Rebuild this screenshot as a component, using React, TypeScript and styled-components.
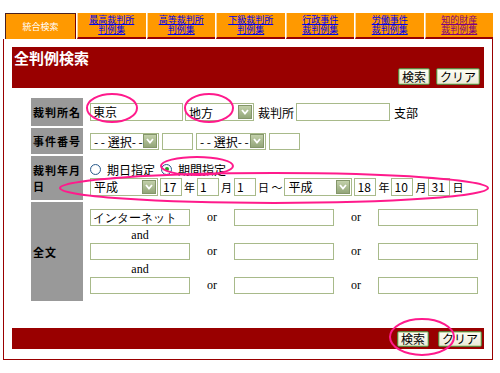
import styled, { createGlobalStyle } from "styled-components";

const GlobalStyle = createGlobalStyle`
  body {
    margin: 0;
    background: #fff;
    font-family: "Noto Sans CJK JP", "DejaVu Sans", sans-serif;
    color: #000;
  }
`;

const tabs = [
  { top: "最高裁判所", bottom: "判例集" },
  { top: "高等裁判所", bottom: "判例集" },
  { top: "下級裁判所", bottom: "判例集" },
  { top: "行政事件", bottom: "裁判例集" },
  { top: "労働事件", bottom: "裁判例集" },
  { top: "知的財産", bottom: "裁判例集", visited: true },
];

const Page = styled.div`
  position: relative;
  width: 490px;
  padding: 13px 0 0 3px;
`;

const TabRow = styled.div`
  display: flex;
  gap: 1px;
  margin-left: 2px;
  height: 26px;
  font-family: "Liberation Sans", "Noto Sans CJK JP", sans-serif;
`;

const ActiveTab = styled.div`
  width: 71px;
  box-sizing: border-box;
  height: 26px;
  background: #ff9900;
  border: 1px solid #4a2020;
  border-right-color: #7a0000;
  border-bottom: none;
  display: flex;
  align-items: center;
  justify-content: center;
  color: #fff;
  font-size: 9px;
`;

const Tab = styled.div`
  flex: 1;
  box-sizing: border-box;
  height: 26px;
  padding-bottom: 1px;
  background: #ff9900;
  border-left: 1px solid #ffd699;
  border-bottom: 2px solid #990000;
  display: flex;
  flex-direction: column;
  align-items: center;
  justify-content: center;
  font-size: 9px;
  line-height: 10px;
`;

const TabLink = styled.a<{ $visited?: boolean }>`
  display: block;
  height: 10px;
  color: ${(p) => (p.$visited ? "#800080" : "#0000ee")};
  text-decoration: underline;
`;

const Panel = styled.div`
  border: 1px solid #990000;
  border-top: none;
  padding: 8px 8px 10px 8px;
`;

const TitleBar = styled.div`
  background: #990000;
  height: 41px;
  box-sizing: border-box;
  padding: 2px 4px 3px 2px;
  display: flex;
  flex-direction: column;
  justify-content: space-between;
`;

const Title = styled.div`
  color: #fff;
  font-weight: bold;
  font-size: 15px;
  line-height: 17px;
`;

const ButtonRow = styled.div<{ $gap: number }>`
  display: flex;
  justify-content: flex-end;
  gap: ${(p) => p.$gap}px;
`;

const Button = styled.button<{ $h: number }>`
  height: ${(p) => p.$h}px;
  padding: 0 3px;
  font-family: inherit;
  font-size: 12px;
  line-height: 1;
  color: #000;
  background: linear-gradient(#fffff6, #ece9d8);
  border: 1px solid #5f7f3f;
  box-shadow: inset 0 0 0 1px #c8d8a8;
  border-radius: 2px;
`;

const Form = styled.div`
  display: grid;
  grid-template-columns: 52px 1fr;
  row-gap: 2px;
  margin: 10px 0 0 19px;
`;

const Label = styled.div<{ $h: number }>`
  height: ${(p) => p.$h}px;
  background: #999999;
  font-size: 11px;
  font-weight: bold;
  letter-spacing: 1px;
  line-height: 16px;
  padding-left: 2px;
  display: flex;
  align-items: center;
`;

const Cell = styled.div`
  padding-left: 7px;
  display: flex;
  flex-direction: column;
  justify-content: center;
  font-size: 12px;
`;

const Line = styled.div<{ $gap?: number }>`
  display: flex;
  align-items: center;
  gap: ${(p) => p.$gap ?? 3}px;
`;

const Input = styled.div<{ $w: number; $h?: number }>`
  width: ${(p) => p.$w}px;
  height: ${(p) => p.$h ?? 18}px;
  box-sizing: border-box;
  border: 1px solid #a8ba8a;
  background: #fff;
  font-size: 12px;
  line-height: 16px;
  padding-left: 2px;
  white-space: nowrap;
  overflow: hidden;
`;

const SelectBox = styled.div<{ $w: number; $h?: number }>`
  width: ${(p) => p.$w}px;
  height: ${(p) => p.$h ?? 18}px;
  box-sizing: border-box;
  border: 1px solid #a8ba8a;
  background: #fff;
  display: flex;
  align-items: center;
  justify-content: space-between;
  padding: 0 1px 0 3px;
  font-size: 12px;
  white-space: nowrap;
`;

const Arrow = styled.span`
  width: 14px;
  height: 14px;
  box-sizing: border-box;
  border: 1px solid #84966a;
  background: linear-gradient(#c2d0aa, #93a679);
  display: flex;
  align-items: center;
  justify-content: center;
`;

const Text = styled.span<{ $ml?: number; $size?: number }>`
  font-size: ${(p) => p.$size ?? 12}px;
  margin-left: ${(p) => p.$ml ?? 0}px;
  white-space: nowrap;
`;

const Radio = styled.span<{ $on?: boolean }>`
  width: 11px;
  height: 11px;
  box-sizing: border-box;
  border-radius: 50%;
  border: 1px solid #2c5c8c;
  background: radial-gradient(circle, #fff 50%, #dde6ee);
  display: inline-flex;
  align-items: center;
  justify-content: center;
  &::after {
    content: "";
    display: ${(p) => (p.$on ? "block" : "none")};
    width: 4px;
    height: 4px;
    border-radius: 50%;
    background: #22a022;
  }
`;

const WordGrid = styled.div`
  display: grid;
  grid-template-columns: 100px 44px 100px 44px 100px;
  grid-auto-rows: 17px;
  row-gap: 17px;
  align-items: center;
  justify-items: center;
  font-family: "Liberation Serif", "DejaVu Serif", serif;
  font-size: 12px;
  position: relative;
`;

const Conj = styled.div<{ $row: number }>`
  position: absolute;
  left: 0;
  width: 100px;
  top: ${(p) => p.$row * 34 + 20}px;
  text-align: center;
  font-family: "Liberation Serif", "DejaVu Serif", serif;
  font-size: 12px;
  line-height: 12px;
`;

const Footer = styled.div`
  margin-top: 27px;
  background: #990000;
  height: 21px;
  box-sizing: border-box;
  padding: 3px 2px 2px 0;
  display: flex;
  justify-content: flex-end;
`;

const Marks = styled.svg`
  position: absolute;
  left: 0;
  top: 0;
  pointer-events: none;
`;

const Select = ({ w, h, children }: { w: number; h?: number; children: string }) => (
  <SelectBox $w={w} $h={h}>
    <span>{children}</span>
    <Arrow>
      <svg width="8" height="6" viewBox="0 0 8 6">
        <polyline points="1,1 4,4.5 7,1" fill="none" stroke="#fff" strokeWidth="1.8" />
      </svg>
    </Arrow>
  </SelectBox>
);

export default function App() {
  return (
    <Page>
      <GlobalStyle />
      <TabRow>
        <ActiveTab>統合検索</ActiveTab>
        {tabs.map((t) => (
          <Tab key={t.top}>
            <TabLink $visited={t.visited}>{t.top}</TabLink>
            <TabLink $visited={t.visited}>{t.bottom}</TabLink>
          </Tab>
        ))}
      </TabRow>
      <Panel>
        <TitleBar>
          <Title>全判例検索</Title>
          <ButtonRow $gap={6}>
            <Button $h={17}>検索</Button>
            <Button $h={17}>クリア</Button>
          </ButtonRow>
        </TitleBar>

        <Form>
          <Label $h={28}>裁判所名</Label>
          <Cell>
            <Line $gap={2}>
              <Input $w={93}>東京</Input>
              <Select w={69}>地方</Select>
              <Text $ml={2}>裁判所</Text>
              <Input $w={94}></Input>
              <Text $ml={2}>支部</Text>
            </Line>
          </Cell>

          <Label $h={26}>事件番号</Label>
          <Cell>
            <Line>
              <Select w={69} h={17}>- - 選択- -</Select>
              <Input $w={31} $h={17}></Input>
              <Select w={70} h={17}>- - 選択- -</Select>
              <Input $w={31} $h={17}></Input>
            </Line>
          </Cell>

          <Label $h={44}>裁判年月日</Label>
          <Cell>
            <Line $gap={6}>
              <Radio />
              <Text>期日指定</Text>
              <Radio $on />
              <Text>期間指定</Text>
            </Line>
            <Line $gap={2}>
              <Select w={68}>平成</Select>
              <Input $w={22}>17</Input>
              <Text $size={11}>年</Text>
              <Input $w={22}>1</Input>
              <Text $size={11}>月</Text>
              <Input $w={22}>1</Input>
              <Text $size={11}>日 ～</Text>
              <Select w={68}>平成</Select>
              <Input $w={22}>18</Input>
              <Text $size={11}>年</Text>
              <Input $w={22}>10</Input>
              <Text $size={11}>月</Text>
              <Input $w={22}>31</Input>
              <Text $size={11}>日</Text>
            </Line>
          </Cell>

          <Label $h={99}>全文</Label>
          <Cell>
            <WordGrid>
              <Input $w={100} $h={17}>インターネット</Input>
              <span>or</span>
              <Input $w={100} $h={17}></Input>
              <span>or</span>
              <Input $w={100} $h={17}></Input>
              <Input $w={100} $h={17}></Input>
              <span>or</span>
              <Input $w={100} $h={17}></Input>
              <span>or</span>
              <Input $w={100} $h={17}></Input>
              <Input $w={100} $h={17}></Input>
              <span>or</span>
              <Input $w={100} $h={17}></Input>
              <span>or</span>
              <Input $w={100} $h={17}></Input>
              <Conj $row={0}>and</Conj>
              <Conj $row={1}>and</Conj>
            </WordGrid>
          </Cell>
        </Form>

        <Footer>
          <ButtonRow $gap={9}>
            <Button $h={16}>検索</Button>
            <Button $h={16}>クリア</Button>
          </ButtonRow>
        </Footer>
      </Panel>

      <Marks width="500" height="373" viewBox="0 0 500 373">
        <g fill="none" stroke="#ff1a8c" strokeWidth="2">
          <ellipse cx="112" cy="108" rx="25" ry="14" />
          <ellipse cx="209" cy="108" rx="24" ry="14" />
          <ellipse cx="197" cy="166" rx="36" ry="9" />
          <ellipse cx="274" cy="188" rx="214" ry="15" />
          <ellipse cx="422" cy="337" rx="32" ry="18" />
        </g>
      </Marks>
    </Page>
  );
}
